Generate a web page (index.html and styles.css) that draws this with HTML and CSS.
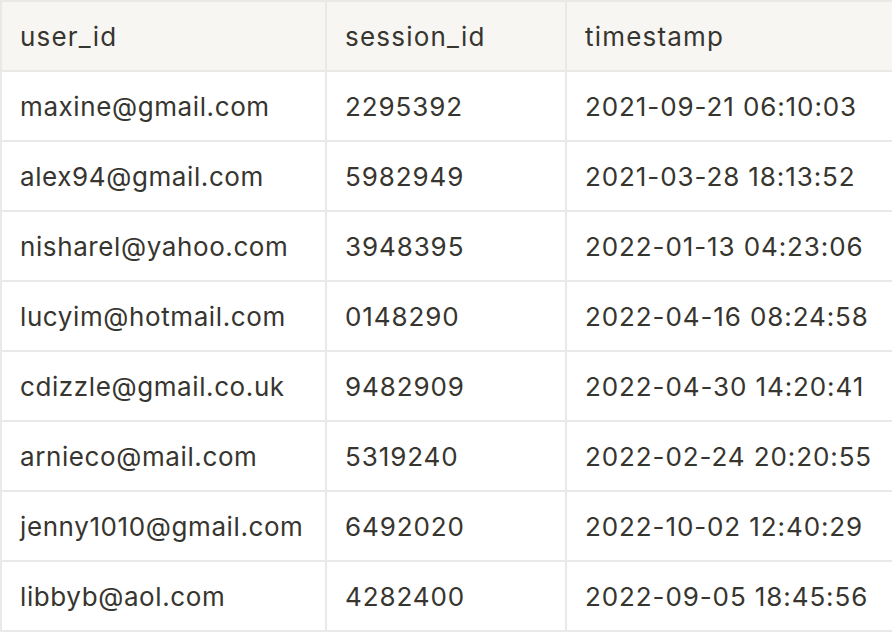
FILE: index.html
```html
<!DOCTYPE html>
<html>
<head>
<meta charset="utf-8">
<link rel="stylesheet" href="styles.css">
</head>
<body>
<div class="table">
  <div class="cell head">user_id</div><div class="cell head">session_id</div><div class="cell head">timestamp</div>
  <div class="cell">maxine@gmail.com</div><div class="cell num">2295392</div><div class="cell num">2021-09-21 06:10:03</div>
  <div class="cell">alex94@gmail.com</div><div class="cell num">5982949</div><div class="cell num">2021-03-28 18:13:52</div>
  <div class="cell">nisharel@yahoo.com</div><div class="cell num">3948395</div><div class="cell num">2022-01-13 04:23:06</div>
  <div class="cell">lucyim@hotmail.com</div><div class="cell num">0148290</div><div class="cell num">2022-04-16 08:24:58</div>
  <div class="cell">cdizzle@gmail.co.uk</div><div class="cell num">9482909</div><div class="cell num">2022-04-30 14:20:41</div>
  <div class="cell">arnieco@mail.com</div><div class="cell num">5319240</div><div class="cell num">2022-02-24 20:20:55</div>
  <div class="cell">jenny1010@gmail.com</div><div class="cell num">6492020</div><div class="cell num">2022-10-02 12:40:29</div>
  <div class="cell">libbyb@aol.com</div><div class="cell num">4282400</div><div class="cell num">2022-09-05 18:45:56</div>
</div>
</body>
</html>
```
FILE: styles.css
```css
html, body { margin: 0; padding: 0; background: #ffffff; }
.table {
  display: grid;
  grid-template-columns: 323px 238px 1fr;
  grid-auto-rows: 68px;
  gap: 2px;
  padding: 2px 0 2px 2px;
  background: #e9e9e7;
  width: 890px;
  font-family: Inter, "Noto Sans", sans-serif;
  font-size: 26px;
  letter-spacing: 0.6px;
  color: #37352f;
}
.cell {
  background: #ffffff;
  display: flex;
  align-items: center;
  padding-left: 18px;
  white-space: nowrap;
  overflow: hidden;
}
.num { letter-spacing: 0.9px; }
.head { background: #f7f6f3; letter-spacing: 1.2px; }
```
